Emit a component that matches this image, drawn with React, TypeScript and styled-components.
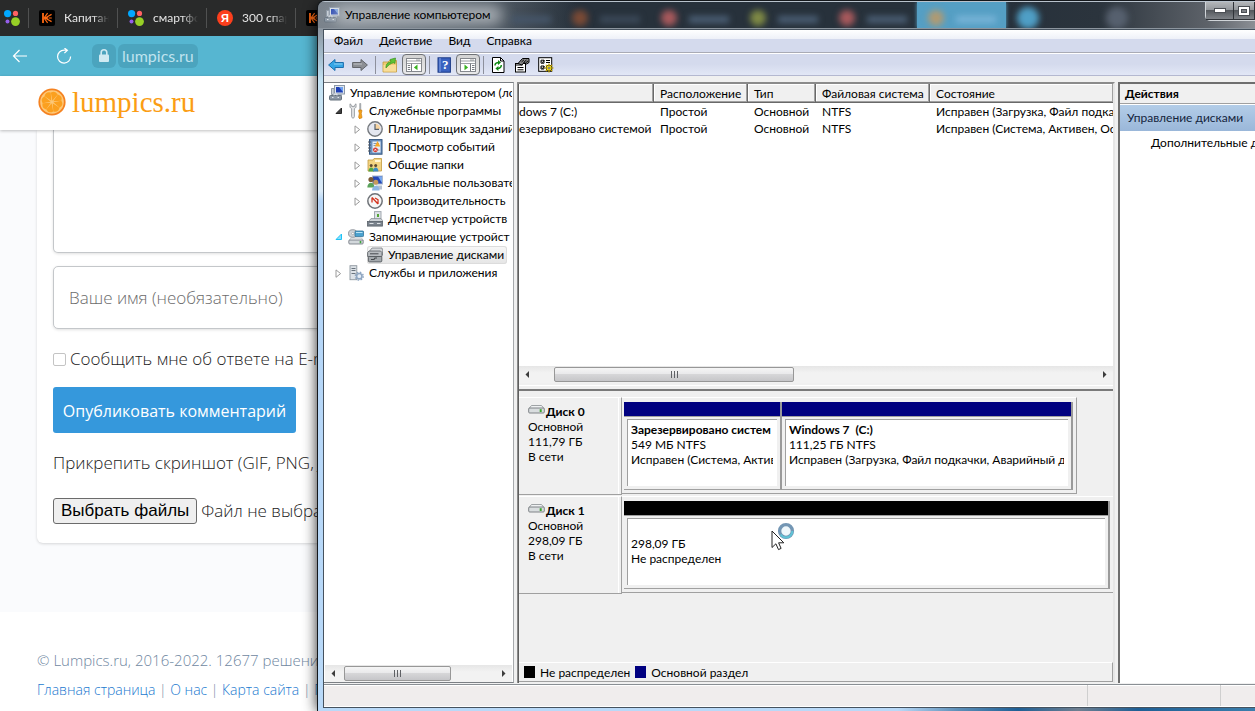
import React from "react";
import styled, { createGlobalStyle, css } from "styled-components";

const ui = 'Lato, "Open Sans", sans-serif';
const site = '"Open Sans", "Noto Sans", sans-serif';

const Global = createGlobalStyle`
  * { box-sizing: border-box; }
  html, body { margin: 0; padding: 0; }
  body { font-family: ${ui}; font-size: 12px; color: #000; overflow: hidden; }
  button, input, textarea { font: inherit; }
`;

const Desktop = styled.div`
  position: relative;
  min-height: 100vh;
  overflow: hidden;
  display: flex;
  flex-direction: column;
  background: #fafbfd;
`;

/* ---------- browser ---------- */

const TabStrip = styled.div`
  height: 36px;
  background: #292a2a;
  display: flex;
  align-items: center;
`;

const Tab = styled.button<{ $short?: boolean }>`
  flex: none;
  width: ${(p) => (p.$short ? 29 : 89)}px;
  height: 20px;
  padding: 0 8px 0 ${(p) => (p.$short ? 4 : 10)}px;
  border: 0;
  border-right: 1px solid #505151;
  background: none;
  color: #e4e4e4;
  font-size: 12px;
  line-height: 20px;
  display: flex;
  align-items: center;
  gap: 9px;
`;

const TabLabel = styled.span`
  flex: 1;
  overflow: hidden;
  white-space: nowrap;
  text-align: left;
  mask-image: linear-gradient(90deg, #000 65%, transparent);
`;

const AddressBar = styled.div`
  height: 40px;
  background: #56b6d1;
  display: flex;
  align-items: center;
  padding-left: 12px;
`;

const NavButton = styled.button`
  width: 16px;
  height: 24px;
  margin-right: 28px;
  padding: 0;
  border: 0;
  background: none;
  display: flex;
  align-items: center;
  & + & { margin-right: 20px; }
`;

const Pill = styled.span`
  height: 24px;
  min-width: 24px;
  margin-right: 2px;
  border-radius: 6px;
  background: #4ba4be;
  color: #bfe3ee;
  font-size: 16px;
  line-height: 24px;
  padding: 0 4px;
  display: flex;
  align-items: center;
  justify-content: center;
`;

const SiteHeader = styled.header`
  height: 54px;
  background: #fff;
  padding: 0 0 2px 38px;
  display: flex;
  align-items: center;
  gap: 6px;
  box-shadow: 0 1px 3px rgba(0, 0, 0, 0.25);
  z-index: 1;
`;

const Brand = styled.a`
  color: #fb9d14;
  font: 29px/34px "Liberation Serif", serif;
  text-decoration: none;
`;

const CommentForm = styled.form`
  margin: 0 0 69px 37px;
  padding: 0 16px 19px;
  background: #fff;
  border-radius: 0 0 6px 6px;
  box-shadow: 0 1px 3px rgba(0, 0, 0, 0.15);
  display: flex;
  flex-direction: column;
  align-items: flex-start;
  font-family: ${site};
  color: #222;
  font-weight: 300;
`;

const field = css`
  width: 100%;
  border: 1px solid #c4c7ca;
  background: #fff;
  outline: 0;
  resize: none;
  box-shadow: 0 1px 3px rgba(0, 0, 0, 0.12);
`;

const CommentBox = styled.textarea`
  ${field}
  height: 123px;
  border-top: 0;
  border-radius: 0 0 5px 5px;
`;

const NameField = styled.input`
  ${field}
  height: 63px;
  margin-top: 13px;
  padding: 0 15px;
  border-radius: 5px;
  font-size: 17px;
  font-weight: 300;
  &::placeholder { color: #6c6c6c; opacity: 1; }
`;

const Line = styled.div`
  height: 24px;
  line-height: 24px;
  font-size: 17px;
  white-space: nowrap;
  display: flex;
  align-items: center;
  gap: 4px;
`;

const NotifyLine = styled(Line).attrs({ as: "label" })`
  margin: 18px 0 16px;
`;

const Tick = styled.input`
  appearance: none;
  width: 13px;
  height: 13px;
  margin: 0;
  border: 1px solid #c4c4c4;
  border-radius: 2px;
  background: #fff;
`;

const Submit = styled.button`
  height: 46px;
  width: 243px;
  margin-bottom: 18px;
  border: 0;
  border-radius: 3px;
  background: #3598dc;
  color: #fff;
  font-size: 16px;
  font-weight: 400;
  padding: 1px 0 0;
`;

const FileLine = styled(Line)`
  margin-top: 23px;
  height: 26px;
`;

const FileButton = styled.button`
  height: 26px;
  padding: 0 7px;
  border: 1px solid #6b6b6b;
  border-radius: 3px;
  background: #efefef;
  color: #000;
  font: 17px/22px "Liberation Sans", sans-serif;
`;

const SiteFooter = styled.footer`
  flex: 1;
  background: #fff;
  padding: 38px 0 0 37px;
  font-family: ${site};
  font-size: 14px;
  font-weight: 300;
  line-height: 20px;
  color: #6f879f;
  white-space: nowrap;
  display: flex;
  flex-direction: column;
  gap: 10px;
  a { color: #2279cf; text-decoration: none; }
`;

const Copyright = styled.div`
  font-size: 15px;
`;

/* ---------- window frame ---------- */

const Window = styled.section`
  position: absolute;
  inset: 0 0 0 317px;
  z-index: 2;
  display: flex;
  flex-direction: column;
  border: solid #14181c;
  border-width: 1px 0 0 1px;
  border-radius: 8px 0 0 0;
  overflow: hidden;
  padding-left: 5px;
  background:
    linear-gradient(90deg, #b9d9f8 0, #b9d9f8 580px, #5d8fb8 640px, #1f5f95 700px, #6f7f90 760px, #1f5f95 820px, #3b7eac) left bottom / 100% 3px no-repeat,
    linear-gradient(#5b6670 0, #8f9aa5 30px, #a9c3d4 60px, #c4e2f3 80px, #dcebf7 190px, #b4d5f7 200px, #b9d9f8 100%);
`;

const WindowShadow = styled.div`
  position: absolute;
  inset: 4px 0 0 317px;
  border-radius: 8px 0 0 0;
  box-shadow: 0 0 14px rgba(0, 0, 0, 0.85);
  z-index: 1;
`;

const TitleBar = styled.header`
  position: relative;
  flex: none;
  height: 28px;
  margin-left: -5px;
  padding-left: 6px;
  background: linear-gradient(90deg, #7b848d 0, #66707a 90px, #4a545e 190px, #27313b 260px, #27313b 690px, #2b343d 780px, #5d6269 890px, #8b8f95 100%);
  border-top: 1px solid #b8c2cc;
  border-bottom: 1px solid #8c959e;
  display: flex;
  align-items: center;
  gap: 5px;
  overflow: hidden;
`;

const Backdrop = styled.div`
  position: absolute;
  inset: 0 0 0 154px;
  display: flex;
  pointer-events: none;
`;

const GhostTab = styled.div<{ $active?: boolean }>`
  width: 89px;
  flex: none;
  padding-left: 11px;
  display: flex;
  align-items: center;
  gap: 12px;
  background: ${(p) => (p.$active ? "#559fc4" : "none")};
  box-shadow: ${(p) => (p.$active ? "0 0 4px #559fc4" : "none")};
`;

const GhostIcon = styled.i<{ $tone: string; $big?: boolean }>`
  width: ${(p) => (p.$big ? 22 : 16)}px;
  height: ${(p) => (p.$big ? 22 : 16)}px;
  margin-top: 6px;
  border-radius: 11px;
  background: ${(p) => p.$tone};
  filter: blur(3px);
`;

const GhostLabel = styled.i<{ $tone: string }>`
  width: 40px;
  height: 7px;
  margin-top: 8px;
  background: ${(p) => p.$tone};
  filter: blur(3px);
`;

const TitleText = styled.h1`
  position: relative;
  margin: 0;
  font-size: 12px;
  font-weight: 400;
  line-height: 20px;
  white-space: nowrap;
  &::before {
    content: "";
    position: absolute;
    inset: 0 -12px;
    z-index: -1;
    border-radius: 10px;
    background: rgba(188, 193, 198, 0.8);
    filter: blur(7px);
  }
  z-index: 1;
`;

const CaptionButtons = styled.div`
  position: relative;
  align-self: flex-start;
  margin-left: auto;
  height: 19px;
  display: flex;
  border: solid #d0d4d8;
  border-width: 0 0 1px 1px;
  border-radius: 0 0 0 5px;
`;

const CaptionButton = styled.button<{ $w: number }>`
  width: ${(p) => p.$w}px;
  padding: 0;
  border: solid #2f3338;
  border-width: 0 1px 1px 0;
  background: linear-gradient(#b4b7ba 0, #94989c 45%, #54585d 50%, #7f8388 100%);
  display: flex;
  align-items: center;
  justify-content: center;
`;

const Client = styled.div`
  flex: 1;
  min-height: 0;
  margin-bottom: 3px;
  border: solid #46525e;
  border-width: 1px 0 1px 1px;
  background: #f0f0f0;
  display: flex;
  flex-direction: column;
`;

const MenuBar = styled.nav`
  flex: none;
  height: 23px;
  background: linear-gradient(#fff 0, #eef1f8 9px, #d4daed 9px, #d4daed 100%);
  border-bottom: 1px solid #a9abb5;
  display: flex;
  align-items: center;
  padding-left: 2px;
`;

const MenuItem = styled.button`
  border: 0;
  background: none;
  padding: 0 8px;
  font-size: 12px;
  line-height: 20px;
`;

const ToolBar = styled.div`
  flex: none;
  height: 23px;
  background: linear-gradient(#d4daed 0, #d4daed 10px, #e2e7f6 100%);
  border-top: 1px solid #fff;
  border-bottom: 1px solid #b4b8d0;
  display: flex;
  align-items: center;
`;

const Tool = styled.button<{ $on?: boolean }>`
  width: 24px;
  height: 21px;
  padding: 0;
  border: 1px solid ${(p) => (p.$on ? "#6f7277" : "transparent")};
  border-radius: 4px;
  background: ${(p) => (p.$on ? "linear-gradient(#d3d3d3, #e9e9ea)" : "none")};
  display: flex;
  align-items: center;
  justify-content: center;
`;

const Divider = styled.i`
  width: 1px;
  height: 18px;
  margin: 0 2px 0 3px;
  background: #8d909c;
`;

const Panes = styled.div`
  flex: 1;
  min-height: 0;
  padding-top: 6px;
  display: flex;
  gap: 3px;
`;

const Pane = styled.div`
  display: flex;
  flex-direction: column;
  min-width: 0;
  border: 1px solid #7b7f84;
  background: #fff;
`;

/* ---------- tree ---------- */

const TreePane = styled(Pane)`
  width: 190px;
  flex: none;
  margin-bottom: 1px;
  border-left: 0;
  border-right-color: #a6a9ac;
  padding: 1px 1px 0;
`;

const TreeList = styled.ul`
  flex: 1;
  margin: 0;
  padding: 0;
  list-style: none;
  overflow: hidden;
`;

const TreeItem = styled.li<{ $level: number }>`
  height: 18px;
  padding-left: ${(p) => p.$level * 19 - 9}px;
  line-height: 18px;
  white-space: nowrap;
  display: flex;
  align-items: center;
`;

const RootItem = styled(TreeItem)`
  padding-left: 4px;
`;

const Toggle = styled.span`
  flex: none;
  width: 13px;
  height: 18px;
  display: flex;
  align-items: center;
`;

const Node = styled.span<{ $selected?: boolean }>`
  height: 18px;
  padding: 0 3px 0 0;
  display: flex;
  align-items: center;
  gap: 5px;
  border-radius: 3px;
  ${(p) =>
    p.$selected &&
    css`
      background: linear-gradient(#f8f8f8, #e5e5e5);
      box-shadow: inset 0 0 0 1px #dcdcdc;
    `}
`;

const ScrollBar = styled.div`
  flex: none;
  height: 17px;
  background: linear-gradient(#e6e6e6, #f2f2f2 40%);
  display: flex;
  align-items: center;
`;

const ArrowButton = styled.button`
  width: 17px;
  height: 17px;
  flex: none;
  border: 0;
  padding: 0;
  background: none;
  display: flex;
  align-items: center;
  justify-content: center;
`;

const Track = styled.div<{ $before: number }>`
  flex: 1;
  padding-left: ${(p) => p.$before}px;
`;

const Thumb = styled.div<{ $w: number }>`
  width: ${(p) => p.$w}px;
  height: 15px;
  border: 1px solid #979797;
  border-radius: 2px;
  background: linear-gradient(#f5f5f5 0, #e9e9eb 45%, #d6d6d8 50%, #c6c6c9 100%);
  display: flex;
  align-items: center;
  justify-content: center;
`;

/* ---------- volumes ---------- */

const MainPane = styled(Pane)`
  flex: 1;
  margin-bottom: 1px;
  border: solid #8b8b8b;
  border-width: 2px 0 0 1px;
  box-shadow: inset 1px 0 0 #5f5f5f;
  padding-left: 1px;
  background: #f0f0f0;
  border-right: 2px solid #e6e6e6;
`;

const VolumeArea = styled.div`
  flex: none;
  height: 282px;
  background: #fff;
  overflow: hidden;
`;

const VolumeTable = styled.table`
  width: 100%;
  table-layout: fixed;
  border-collapse: separate;
  border-spacing: 0;
  th, td {
    padding: 0 0 0 6px;
    overflow: hidden;
    white-space: nowrap;
    text-align: left;
    font-weight: 400;
  }
  th {
    height: 19px;
    background: #f0f0f0;
    border: solid #696969;
    border-width: 0 1px 1px 0;
    box-shadow: inset -1px -1px 0 #a0a0a0, inset 1px 1px 0 #fff;
  }
  th:last-child { border-right: 0; }
  td { height: 17px; line-height: 17px; }
  td:first-child { padding: 0; }
`;

const Splitter = styled.div`
  flex: none;
  height: 8px;
  border-bottom: 2px solid #7a7a7a;
  box-shadow: inset 0 -3px 0 #f0f0f0, inset 0 -4px 0 #fff;
`;

const DiskList = styled.div`
  flex: 1;
  padding-top: 6px;
`;

const DiskRow = styled.div`
  height: 99px;
  display: flex;
`;

const DiskLabel = styled.div`
  width: 103px;
  flex: none;
  height: 98px;
  padding: 5px 0 0 9px;
  border: solid;
  border-width: 1px 1px 1px 0;
  border-color: #fff #a0a0a0 #a0a0a0;
  box-shadow: inset -2px 0 0 #f0f0f0, inset -3px 0 0 #fff;
  line-height: 15px;
`;

const DiskName = styled.div`
  height: 16px;
  font-weight: 700;
  display: flex;
  align-items: center;
  gap: 1px;
`;

const Partitions = styled.div<{ $inset?: number }>`
  flex: 1;
  min-width: 0;
  height: 97px;
  margin-right: ${(p) => p.$inset ?? 0}px;
  padding: 4px 3px 3px 2px;
  border: solid;
  border-width: 1px ${(p) => (p.$inset ? 1 : 0)}px 1px 0;
  border-color: #fff #a0a0a0 #a0a0a0;
  display: flex;
`;

const Partition = styled.div<{ $grow: number; $tone: string }>`
  flex: ${(p) => p.$grow} 1 0;
  min-width: 0;
  border: solid #a0a0a0;
  border-width: 0 2px 1px 0;
  padding-right: 1px;
  border-right-color: #9a9a9a;
  display: flex;
  flex-direction: column;
  &::before {
    content: "";
    height: 14px;
    flex: none;
    margin-right: -1px;
    background: ${(p) => p.$tone};
    border-bottom: 1px solid #a0a0a0;
  }
`;

const PartitionBody = styled.div<{ $blankTop?: boolean }>`
  flex: 1;
  margin: 2px 2px 3px 3px;
  padding: ${(p) => (p.$blankTop ? 17 : 2)}px 0 0 3px;
  border: solid #a0a0a0;
  border-width: 1px 0 0 1px;
  background: #fff;
  line-height: 15px;
  white-space: nowrap;
  div { overflow: hidden; margin-right: 4px; }
`;

const Legend = styled.div`
  flex: none;
  height: 20px;
  padding-left: 5px;
  border: solid;
  border-width: 1px 1px 1px 0;
  border-color: #fff #a0a0a0 #a0a0a0;
  margin-bottom: 1px;
  display: flex;
  align-items: center;
  gap: 5px;
`;

const Swatch = styled.i<{ $tone: string }>`
  width: 11px;
  height: 12px;
  background: ${(p) => p.$tone};
`;

/* ---------- actions ---------- */

const ActionsPane = styled(Pane)`
  width: 137px;
  flex: none;
  margin-bottom: 1px;
  border: solid #6e6e6e;
  border-width: 2px 0 0 2px;
  overflow: hidden;
  white-space: nowrap;
`;

const ActionsTitle = styled.h2`
  margin: 0;
  height: 20px;
  padding-left: 5px;
  background: #f0f0f0;
  border-bottom: 1px solid #a0a0a0;
  font-size: 12px;
  line-height: 20px;
`;

const ActionsGroup = styled.div`
  height: 26px;
  margin-top: 1px;
  padding-left: 7px;
  background: linear-gradient(#b3cde8, #9ab7d9);
  color: #14243c;
  line-height: 26px;
`;

const ActionLink = styled.a`
  padding: 4px 0 0 31px;
  color: #000;
  text-decoration: none;
  line-height: 16px;
`;

const StatusBar = styled.footer`
  flex: none;
  height: 23px;
  border-top: 1px solid #8a8f94;
  border-bottom: 1px solid #fff;
  box-shadow: inset 0 1px 0 #fff;
  background: #f0eded;
  display: flex;
  justify-content: flex-end;
`;

const StatusCell = styled.span<{ $w: number }>`
  width: ${(p) => p.$w}px;
  border-left: 1px solid #cfcfcf;
`;

const Pointer = styled.svg`
  position: absolute;
  left: 771px;
  top: 521px;
  z-index: 3;
`;

/* ---------- drawings ---------- */

const Glyph = styled.svg`
  flex: none;
  width: 16px;
  height: 16px;
`;

const Svg: React.FC<{ children: React.ReactNode }> = ({ children }) => (
  <Glyph viewBox="0 0 16 16" fill="none" aria-hidden="true">
    {children}
  </Glyph>
);

const DotsIcon = () => (
  <Svg>
    <circle cx="3.6" cy="3.6" r="3.6" fill="#00a8ff" />
    <circle cx="11.5" cy="3.4" r="2.6" fill="#ff6163" />
    <circle cx="3.5" cy="11.6" r="2" fill="#965eeb" />
    <circle cx="11.5" cy="11.6" r="4.4" fill="#97cf26" />
  </Svg>
);

const KIcon = () => (
  <Svg>
    <rect width="16" height="16" rx="2" fill="#000" />
    <path d="M4 3v10" stroke="#ff6a13" strokeWidth="1.8" />
    <path d="M5 8 8.6 3.2M6 8l6.6-3.6M6 8h3M6 8l6.6 3.600M5 8l3.600 4.800M9.500 8h3.300" stroke="#ff6a13" strokeWidth="1.2" />
  </Svg>
);

const YaIcon = () => (
  <Svg>
    <circle cx="8" cy="8" r="8" fill="#fc3f1d" />
    <text x="8" y="12" textAnchor="middle" fontFamily="Liberation Sans, sans-serif" fontWeight="700" fontSize="11" fill="#fff">Я</text>
  </Svg>
);

const BackArrow = () => (
  <Svg>
    <path d="M15 8H1.5M7.500 2 1.500 8l6 6" stroke="#fff" strokeWidth="1.2" />
  </Svg>
);

const Reload = () => (
  <Svg>
    <path d="M14.6 8.500a6.500 6.500 0 1 1-6.500-6.400h3M8.400 0l3 2.200-3 3" stroke="#fff" strokeWidth="1.2" />
  </Svg>
);

const Lock = () => (
  <Svg>
    <path d="M5.200 7V4.600a2.800 2.800 0 0 1 5.600 0V7" stroke="#cfeaf2" strokeWidth="1.6" />
    <rect x="3" y="6.5" width="10" height="7.500" rx="1" fill="#cfeaf2" />
  </Svg>
);

const Orange = () => (
  <svg width="28" height="28" viewBox="0 0 28 28" aria-hidden="true">
    <circle cx="14" cy="14" r="13.600" fill="#f58220" />
    <circle cx="14" cy="14" r="11.800" fill="#fdc878" />
    {[0, 45, 90, 135, 180, 225, 270, 315].map((a) => (
      <path key={a} d="M14 12.600 10.400 5.200Q14 1.600 17.600 5.200Z" fill="#fba01f" transform={`rotate(${a + 15} 14 14)`} />
    ))}
  </svg>
);

const ComputerIcon = () => (
  <Svg>
    <rect x="5.5" y=".5" width="10" height="8.5" fill="#dfe6ee" stroke="#8b98a8" />
    <rect x="7" y="2" width="7" height="5.5" fill="#1d3fb5" />
    <path d="M10 2h4v5z" fill="#6ea0ef" />
    <path d="M2.5 3.5h2.600v6H2.500z" fill="#c9d1d9" stroke="#8d98a5" />
    <path d="M8 9h5v2H8z" fill="#a8b4c0" />
    <rect x=".5" y="10.5" width="12" height="4.5" rx="1" fill="#8b97a4" stroke="#66727e" />
    <path d="M5 10.500V9h3v1.500M3 12.500h1.500M8.500 12.500H10" stroke="#e4e9ee" />
  </Svg>
);

const ToolsIcon = () => (
  <Svg>
    <path d="M2 .8v3.400l1.600 1.600v7.600c0 2.200 2.800 2.200 2.800 0V5.800L8 4.200V.8L6.300 2.400v1.200H3.800V2.400z" fill="#e5e7e9" stroke="#868b90" strokeWidth=".8" />
    <path d="M11.7.5h1.100v7h-1.100z" fill="#b0b4b8" stroke="#83888d" strokeWidth=".5" />
    <path d="M10.8 7h3v2l-.6 1 .8 4.200c0 1.600-3.400 1.600-3.400 0l.8-4.200-.6-1z" fill="#f6a31b" stroke="#c77708" strokeWidth=".6" />
  </Svg>
);

const ClockIcon = () => (
  <Svg>
    <circle cx="8" cy="8" r="7.2" fill="#e4e7f0" stroke="#75797e" strokeWidth="1.400" />
    <path d="M8 2.600A5.400 5.400 0 0 1 13.400 8H8z" fill="#f6d3a0" />
    <path d="M8 3v5.300h4" stroke="#55606c" strokeWidth="1.2" />
  </Svg>
);

const EventIcon = () => (
  <Svg>
    <rect x="2.5" y=".6" width="12.5" height="14.600" fill="#6d92bf" stroke="#33557f" />
    <path d="M5.500 2.500h8v11h-8z" fill="#e7eef6" />
    <path d="M6.500 4.500H12M6.500 6.500H12M6.500 11h6" stroke="#8399b3" />
    <path d="M1 3h3M1 6h3M1 9h3M1 12h3" stroke="#51575e" />
    <path d="m10.500 2 2.800 5.500H7.700z" fill="#f9a825" />
    <circle cx="8.4" cy="10.800" r="2.400" fill="#d8352a" />
    <path d="m7.400 9.800 2 2M9.400 9.800l-2 2" stroke="#fff" strokeWidth=".8" />
  </Svg>
);

const FolderIcon = () => (
  <Svg>
    <path d="M1 3h5l1-1.500h7.500V14H1z" fill="#f3d482" stroke="#c29b3f" strokeWidth=".8" />
    <path d="M8 3h5.500v2H8z" fill="#fff6d5" />
    <circle cx="4.200" cy="8.500" r="1.500" fill="#5c4a32" />
    <circle cx="8.700" cy="8.500" r="1.500" fill="#5c4a32" />
    <path d="M1.500 14.500c0-5.400 5.400-5.400 5.400 0z" fill="#53a845" />
    <path d="M6 14.500c0-5.400 5.400-5.400 5.400 0z" fill="#3c8cc4" />
  </Svg>
);

const UsersIcon = () => (
  <Svg>
    <rect x="5.5" y="1" width="10" height="8" fill="#2447b8" stroke="#aab8cb" />
    <path d="M11 1.500h4V8z" fill="#78a9f0" />
    <path d="M9 10.500h6v4H9z" fill="#b4c1d1" />
    <circle cx="4" cy="4.500" r="2.600" fill="#7b5a35" />
    <circle cx="8.800" cy="7.300" r="2.500" fill="#c79b5d" />
    <path d="M.3 12.500c0-6.500 7.200-6.500 7.200 0z" fill="#5ba35b" />
    <path d="M5 15.600c0-6.600 7.600-6.600 7.600 0z" fill="#8db6e4" />
  </Svg>
);

const PerfIcon = () => (
  <Svg>
    <circle cx="8" cy="8" r="7.200" fill="#f6f6f6" stroke="#6f7378" strokeWidth="1.500" />
    <path d="M5 4.500v5M5 4.500l6 6.500M8 5l3.500 2M11 11V7" stroke="#d3341f" strokeWidth="1.3" />
  </Svg>
);

const DeviceIcon = () => (
  <Svg>
    <rect x="7.5" y=".6" width="6.5" height="8" fill="#dfe4e8" stroke="#a1a8af" />
    <path d="M10 3h2v3h-2z" fill="#54a637" />
    <path d="M2.500 9.500 4 7.600h10l1.500 1.900V11h-13z" fill="#cfd4d8" stroke="#7b8289" strokeWidth=".7" />
    <rect x=".5" y="10.500" width="15" height="4.600" fill="#79828b" stroke="#5a626a" strokeWidth=".8" />
    <path d="M2.500 12.500h4M10 12.500h3.500" stroke="#dfe3e6" />
  </Svg>
);

const StorageIcon = () => (
  <Svg>
    <ellipse cx="4.800" cy="4.500" rx="4.300" ry="3.800" fill="#cdd3d8" stroke="#80878e" strokeWidth=".8" />
    <circle cx="4.800" cy="4.500" r="1.200" fill="#fff" stroke="#888" strokeWidth=".5" />
    <rect x="7" y="2" width="8.600" height="5.600" rx="1" fill="#4ba2cf" stroke="#2d6f96" strokeWidth=".8" />
    <path d="M8 3.500h6.500" stroke="#b9e4f7" />
    <path d="M1 11.500 3 9h10.500l2 2.500z" fill="#f5f6f7" stroke="#9ba2a8" strokeWidth=".6" />
    <rect x=".8" y="11" width="14.400" height="4" rx="1" fill="#d3d8dc" stroke="#6d747b" strokeWidth=".8" />
    <path d="M12.500 12v2.200" stroke="#3da53a" strokeWidth="1.600" />
  </Svg>
);

const DiskMgmtIcon = () => (
  <Svg>
    <path d="M3 3.500 5 1h10l.6 2.500V8H3z" fill="#d5d8db" stroke="#7a7f84" strokeWidth=".8" />
    <path d="M.6 5.500 2 4h11.500l1.500 1.500v4H.6z" fill="#b9bdc1" stroke="#565b60" strokeWidth=".8" />
    <path d="M3 6.800h8.500" stroke="#45494d" />
    <rect x="1.400" y="9.500" width="13.400" height="5.400" rx="1" fill="#a4a9ad" stroke="#55595d" strokeWidth=".9" />
    <path d="M4 12.500h3l1-1.500h2" stroke="#44484c" strokeWidth="1.2" />
  </Svg>
);

const ServicesIcon = () => (
  <Svg>
    <rect x="2" y=".7" width="6.8" height="14" fill="#dde2e7" stroke="#8e979f" strokeWidth=".9" />
    <path d="M3.500 3.500h4M3.500 5.500h4M3.500 8.500h4" stroke="#69737d" />
    <circle cx="11.300" cy="11.200" r="2.700" fill="#e5edf6" stroke="#8fa6c1" strokeWidth="1.600" />
    <circle cx="11.300" cy="11.200" r="4" stroke="#8fa6c1" strokeWidth="1.300" strokeDasharray="1.600 1.540" />
  </Svg>
);

const DiskIcon = () => (
  <svg width="17" height="14" viewBox="0 0 17 14" aria-hidden="true">
    <path d="M1 4.500 3.500 1.500h10L16 4.500z" fill="#eff1f2" stroke="#8a8f93" strokeWidth=".8" />
    <rect x=".7" y="4" width="15.600" height="5" rx="1" fill="#d9dddf" stroke="#74797d" strokeWidth=".9" />
    <path d="M12.700 5.200v2.800" stroke="#39a92c" strokeWidth="2" />
  </svg>
);

const Closed = () => (
  <svg width="7" height="9" viewBox="0 0 7 9" aria-hidden="true">
    <path d="M1 .9v7.400l4.600-3.700z" fill="#fff" stroke="#9a9a9a" />
  </svg>
);

const Opened = ({ hot }: { hot?: boolean }) => (
  <svg width="8" height="8" viewBox="0 0 8 8" aria-hidden="true">
    <path d="M6.500 1v5.500H1z" fill={hot ? "#8fdcfb" : "#404040"} stroke={hot ? "#1cc4f7" : "#262626"} />
  </svg>
);

const ToolArrow = ({ tone, edge, flip }: { tone: string; edge: string; flip?: boolean }) => (
  <Svg>
    <path
      d="M.6 8 7 2.500v3h8.400v5H7v3z"
      fill={tone}
      stroke={edge}
      strokeLinejoin="round"
      transform={flip ? "matrix(-1 0 0 1 16 0)" : undefined}
    />
    <path d={flip ? "M1.500 7H10" : "M6 7h8.500"} stroke="#fff" strokeOpacity=".45" />
  </Svg>
);

const UpFolder = () => (
  <Svg>
    <path d="M1 5h5l1.500-1.500H14.500V15H1z" fill="#f0cb74" stroke="#c29a3e" strokeWidth=".8" />
    <path d="M1.500 8H14v6.500H1.500z" fill="#f8dd98" />
    <path d="M4 11c-.4-4 2-6 5-6l-1-2.500L13.500 1 13 6.500 11.500 5.800C8.500 6.500 6.500 8 4 11z" fill="#5fc235" stroke="#2e8a18" strokeWidth=".6" />
  </Svg>
);

const PaneIcon = ({ right }: { right?: boolean }) => (
  <Svg>
    <rect x=".5" y="1.500" width="15" height="13" fill="#fff" stroke="#85888d" />
    <path d="M1 4h14M1 6.500h14" stroke="#9da0a5" />
    <path d="M10.500 3h1M12.500 3h1" stroke="#44474b" />
    {right ? (
      <>
        <path d="M10.500 6.500V14M12 8.500h2.500M12 10.500h2.500M12 12.500h2.500" stroke="#777b80" />
        <path d="M4.500 7.600v5.600l3.600-2.800z" fill="#38b21f" />
      </>
    ) : (
      <>
        <path d="M5.500 6.500V14M1.800 8.500h2.400M1.800 10.500h2.400M1.800 12.500h2.400" stroke="#777b80" />
        <path d="M11.500 7.600v5.600l-3.600-2.800z" fill="#38b21f" />
      </>
    )}
  </Svg>
);

const HelpIcon = () => (
  <Svg>
    <rect x="2" y=".8" width="12.400" height="14.400" fill="#3a62c0" stroke="#1b3a86" />
    <path d="M4 1v14" stroke="#86a4e4" />
    <text x="9.200" y="12.400" textAnchor="middle" fontFamily="Liberation Serif, serif" fontWeight="700" fontSize="13" fill="#fff">?</text>
  </Svg>
);

const RefreshIcon = () => (
  <Svg>
    <path d="M2.500.5h8l3.500 3.500v11.500H2.500z" fill="#fff" stroke="#000" />
    <path d="M10.500.5V4H14" stroke="#000" />
    <path d="M5 8.500c0-2.200 1.500-3 4-3M11.300 8c0 2.400-1.600 3.400-4 3.400" stroke="#118a16" strokeWidth="1.500" />
    <path d="m8 3 3 2.500L8 8zM8.400 8.900l-3 2.500 3 2.500z" fill="#118a16" />
  </Svg>
);

const PropsIcon = () => (
  <Svg>
    <rect x="1.5" y="6.500" width="10" height="8.500" fill="#fff" stroke="#000" />
    <path d="M1.500 8h7M3.500 10.500h6M3.500 12.800h6" stroke="#000" />
    <path d="M4 6.500 8.500 1.500h6.500v4L12.500 7 10 5.500 8 8z" fill="#8a8a8a" stroke="#000" />
    <path d="M7.500 5 10 2.800M9.500 5.500l3-2.500M11.500 6l2.500-2" stroke="#000" strokeWidth=".9" />
  </Svg>
);

const SettingsIcon = () => (
  <Svg>
    <rect x=".7" y=".7" width="13" height="13.600" fill="#fff" stroke="#000" />
    <path d="M3 3.200h3v3H3zM3 9h3v3H3z" fill="#fff" stroke="#000" />
    <path d="M8 3.500h4M8 5.500h4M3.500 4.500l1 1 1.800-2.500M3.500 10.500l1 1 1.800-2.500" stroke="#000" />
    <circle cx="11" cy="11" r="3" fill="#f9e21d" stroke="#000" strokeWidth=".7" />
    <path d="M11 6.400v2M11 13.600v2M6.400 11h2M13.600 11h2M7.800 7.800l1.400 1.400M12.800 12.800l1.400 1.400M14.200 7.800l-1.400 1.400M9.200 12.800l-1.400 1.400" stroke="#c9a800" strokeWidth="1.2" />
    <circle cx="11" cy="11" r="1" fill="#fff" stroke="#000" strokeWidth=".5" />
  </Svg>
);

const Arrow = ({ right }: { right?: boolean }) => (
  <svg width="5" height="7" viewBox="0 0 5 7" aria-hidden="true">
    <path d={right ? "M1 0v7l3.500-3.500z" : "M4 0v7L.5 3.500z"} fill="#3c3c3c" />
  </svg>
);

const Grip = () => (
  <svg width="9" height="7" viewBox="0 0 9 7" aria-hidden="true">
    <path d="M1.500 0v7M4.500 0v7M7.500 0v7" stroke="#5f6165" />
  </svg>
);

const HScroll = ({ before, thumb }: { before: number; thumb: number }) => (
  <ScrollBar>
    <ArrowButton aria-label="Прокрутить влево"><Arrow /></ArrowButton>
    <Track $before={before}><Thumb $w={thumb}><Grip /></Thumb></Track>
    <ArrowButton aria-label="Прокрутить вправо"><Arrow right /></ArrowButton>
  </ScrollBar>
);

/* ---------- data ---------- */

type TreeEntry = {
  level: number;
  label: string;
  icon: React.ReactNode;
  state?: "open" | "hot" | "closed";
  selected?: boolean;
};

const tree: TreeEntry[] = [
  { level: 1, label: "Служебные программы", icon: <ToolsIcon />, state: "open" },
  { level: 2, label: "Планировщик заданий", icon: <ClockIcon />, state: "closed" },
  { level: 2, label: "Просмотр событий", icon: <EventIcon />, state: "closed" },
  { level: 2, label: "Общие папки", icon: <FolderIcon />, state: "closed" },
  { level: 2, label: "Локальные пользовате", icon: <UsersIcon />, state: "closed" },
  { level: 2, label: "Производительность", icon: <PerfIcon />, state: "closed" },
  { level: 2, label: "Диспетчер устройств", icon: <DeviceIcon /> },
  { level: 1, label: "Запоминающие устройст", icon: <StorageIcon />, state: "hot" },
  { level: 2, label: "Управление дисками", icon: <DiskMgmtIcon />, selected: true },
  { level: 1, label: "Службы и приложения", icon: <ServicesIcon />, state: "closed" },
];

const volumes = [
  ["dows 7 (C:)", "Простой", "Основной", "NTFS", "Исправен (Загрузка, Файл подкач"],
  ["езервировано системой", "Простой", "Основной", "NTFS", "Исправен (Система, Активен, Осн"],
];

const ghosts: { icon: string; label: string; active?: boolean; big?: boolean }[] = [
  { icon: "transparent", label: "#46566a" },
  { icon: "#7a4a35", label: "#3c4a5a" },
  { icon: "#a8595c", label: "#4c6076" },
  { icon: "#7f8a45", label: "#4c6076" },
  { icon: "#a8595c", label: "#4c6076" },
  { icon: "#b09a72", label: "#79b4d8", active: true },
  { icon: "#4f9fc6", label: "transparent", big: true },
  { icon: "#56606e", label: "transparent", big: true },
];

const App: React.FC = () => (
  <Desktop>
    <Global />
    <TabStrip>
      <Tab $short aria-label="Вкладка"><DotsIcon /></Tab>
      <Tab><KIcon /><TabLabel>Капитан</TabLabel></Tab>
      <Tab><DotsIcon /><TabLabel>смартфо</TabLabel></Tab>
      <Tab><YaIcon /><TabLabel>300 спар</TabLabel></Tab>
      <Tab aria-label="Вкладка"><KIcon /></Tab>
    </TabStrip>
    <AddressBar>
      <NavButton aria-label="Назад"><BackArrow /></NavButton>
      <NavButton aria-label="Обновить"><Reload /></NavButton>
      <Pill><Lock /></Pill>
      <Pill>lumpics.ru</Pill>
    </AddressBar>
    <SiteHeader>
      <Orange />
      <Brand href="#">lumpics.ru</Brand>
    </SiteHeader>
    <CommentForm onSubmit={(e) => e.preventDefault()}>
      <CommentBox aria-label="Комментарий" />
      <NameField aria-label="Ваше имя" placeholder="Ваше имя (необязательно)" />
      <NotifyLine>
        <Tick type="checkbox" />
        Сообщить мне об ответе на E-mail
      </NotifyLine>
      <Submit type="submit">Опубликовать комментарий</Submit>
      <Line>Прикрепить скриншот (GIF, PNG, JPG)</Line>
      <FileLine>
        <FileButton type="button">Выбрать файлы</FileButton>
        <span>Файл не выбран</span>
      </FileLine>
    </CommentForm>
    <SiteFooter>
      <Copyright>© Lumpics.ru, 2016-2022. 12677 решений</Copyright>
      <div>
        <a href="#">Главная страница</a> | <a href="#">О нас</a> | <a href="#">Карта сайта</a> | <a href="#">П</a>
      </div>
    </SiteFooter>

    <WindowShadow />
    <Window>
      <TitleBar>
        <Backdrop>
          {ghosts.map((g, i) => (
            <GhostTab key={i} $active={g.active}>
              <GhostIcon $tone={g.icon} $big={g.big} />
              <GhostLabel $tone={g.label} />
            </GhostTab>
          ))}
        </Backdrop>
        <ComputerIcon />
        <TitleText>Управление компьютером</TitleText>
        <CaptionButtons>
          <CaptionButton $w={28} aria-label="Свернуть">
            <svg width="12" height="5" viewBox="0 0 12 5"><rect x=".5" y=".5" width="11" height="4" fill="#fff" stroke="#4b4f54" /></svg>
          </CaptionButton>
          <CaptionButton $w={21} aria-label="Развернуть">
            <svg width="12" height="10" viewBox="0 0 12 10"><rect x=".5" y=".5" width="11" height="9" fill="#fff" stroke="#4b4f54" /><rect x="3.5" y="3.5" width="5" height="3" fill="#7d8186" stroke="#4b4f54" /></svg>
          </CaptionButton>
        </CaptionButtons>
      </TitleBar>
      <Client>
        <MenuBar>
          <MenuItem>Файл</MenuItem>
          <MenuItem>Действие</MenuItem>
          <MenuItem>Вид</MenuItem>
          <MenuItem>Справка</MenuItem>
        </MenuBar>
        <ToolBar>
          <Tool aria-label="Назад"><ToolArrow tone="#35a6e6" edge="#1b6fae" /></Tool>
          <Tool aria-label="Вперед"><ToolArrow tone="#8c8f94" edge="#63666b" flip /></Tool>
          <Divider />
          <Tool aria-label="Вверх"><UpFolder /></Tool>
          <Tool $on aria-label="Дерево консоли"><PaneIcon /></Tool>
          <Divider />
          <Tool aria-label="Справка"><HelpIcon /></Tool>
          <Tool $on aria-label="Панель действий"><PaneIcon right /></Tool>
          <Divider />
          <Tool aria-label="Обновить"><RefreshIcon /></Tool>
          <Tool aria-label="Свойства"><PropsIcon /></Tool>
          <Tool aria-label="Параметры"><SettingsIcon /></Tool>
        </ToolBar>
        <Panes>
          <TreePane>
            <TreeList>
              <RootItem $level={0}>
                <Node><ComputerIcon />Управление компьютером (ло</Node>
              </RootItem>
              {tree.map((t) => (
                <TreeItem key={t.label} $level={t.level}>
                  <Toggle>
                    {t.state === "closed" && <Closed />}
                    {t.state === "open" && <Opened />}
                    {t.state === "hot" && <Opened hot />}
                  </Toggle>
                  <Node $selected={t.selected}>{t.icon}{t.label}</Node>
                </TreeItem>
              ))}
            </TreeList>
            <HScroll before={2} thumb={107} />
          </TreePane>

          <MainPane>
            <VolumeArea>
              <VolumeTable>
                <colgroup>
                  <col width="135" />
                  <col width="94" />
                  <col width="68" />
                  <col width="114" />
                  <col />
                </colgroup>
                <thead>
                  <tr>
                    <th aria-label="Том" />
                    <th>Расположение</th>
                    <th>Тип</th>
                    <th>Файловая система</th>
                    <th>Состояние</th>
                  </tr>
                </thead>
                <tbody>
                  {volumes.map((row) => (
                    <tr key={row[0]}>{row.map((c, i) => <td key={i}>{c}</td>)}</tr>
                  ))}
                </tbody>
              </VolumeTable>
            </VolumeArea>
            <HScroll before={18} thumb={240} />
            <Splitter />
            <DiskList>
              <DiskRow>
                <DiskLabel>
                  <DiskName><DiskIcon />Диск 0</DiskName>
                  <div>Основной</div>
                  <div>111,79 ГБ</div>
                  <div>В сети</div>
                </DiskLabel>
                <Partitions $inset={36}>
                  <Partition $grow={157} $tone="#000080">
                    <PartitionBody>
                      <div><b>Зарезервировано систем</b></div>
                      <div>549 МБ NTFS</div>
                      <div>Исправен (Система, Актив</div>
                    </PartitionBody>
                  </Partition>
                  <Partition $grow={292} $tone="#000080">
                    <PartitionBody>
                      <div><b>Windows 7&nbsp; (C:)</b></div>
                      <div>111,25 ГБ NTFS</div>
                      <div>Исправен (Загрузка, Файл подкачки, Аварийный да</div>
                    </PartitionBody>
                  </Partition>
                </Partitions>
              </DiskRow>
              <DiskRow>
                <DiskLabel>
                  <DiskName><DiskIcon />Диск 1</DiskName>
                  <div>Основной</div>
                  <div>298,09 ГБ</div>
                  <div>В сети</div>
                </DiskLabel>
                <Partitions>
                  <Partition $grow={1} $tone="#000">
                    <PartitionBody $blankTop>
                      <div>298,09 ГБ</div>
                      <div>Не распределен</div>
                    </PartitionBody>
                  </Partition>
                </Partitions>
              </DiskRow>
            </DiskList>
            <Legend>
              <Swatch $tone="#000" />Не распределен
              <Swatch $tone="#000080" />Основной раздел
            </Legend>
          </MainPane>

          <ActionsPane as="aside">
            <ActionsTitle>Действия</ActionsTitle>
            <ActionsGroup>Управление дисками</ActionsGroup>
            <ActionLink href="#">Дополнительные действия</ActionLink>
          </ActionsPane>
        </Panes>
        <StatusBar>
          <StatusCell $w={133} />
          <StatusCell $w={35} />
        </StatusBar>
      </Client>
    </Window>

    <Pointer width="26" height="30" viewBox="0 0 26 30" aria-hidden="true">
      <circle cx="15" cy="10" r="6.400" fill="#eef7fb" stroke="#7396b4" strokeWidth="3.400" />
      <circle cx="15" cy="10" r="6.400" fill="none" stroke="#5fc3d6" strokeWidth="2" strokeDasharray="16 25" />
      <path d="M1 10v16.500l3.900-3.700 2.600 5.800 2.600-1.200-2.500-5.600h5.200z" fill="#fff" stroke="#222" />
    </Pointer>
  </Desktop>
);

export default App;
